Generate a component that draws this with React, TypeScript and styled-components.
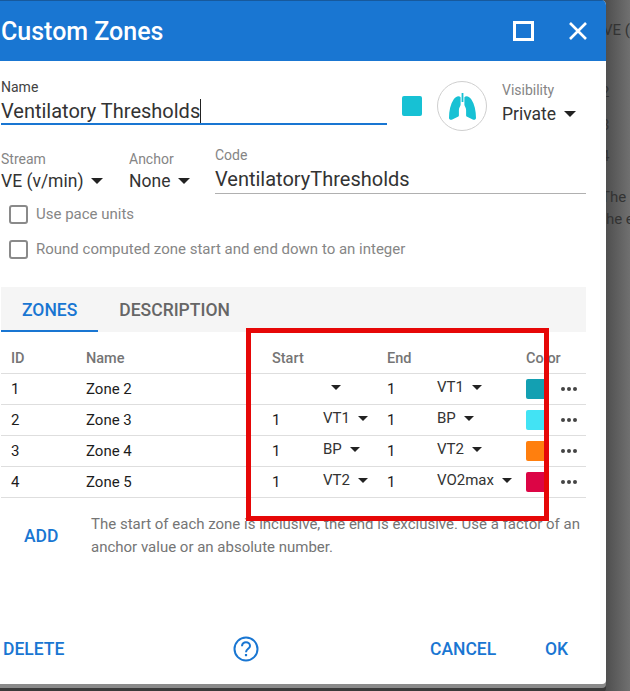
import styled, { createGlobalStyle } from "styled-components";

const blue = "#1976d2";

const GlobalStyle = createGlobalStyle`
  html, body {
    margin: 0;
    padding: 0;
    overflow: hidden;
    background: #616161;
    font-family: Roboto, "Liberation Sans", sans-serif;
  }
`;

const Page = styled.div`
  position: relative;
  width: 630px;
  height: 691px;
  overflow: hidden;
  background: linear-gradient(90deg, #4f4f4f 606px, #707070 630px);
`;

const Backdrop = styled.div`
  display: flex;
  flex-direction: column;
  padding: 19px 0 0 601px;
  color: #333;
  font-size: 15px;
  line-height: 22px;
  white-space: nowrap;
`;

const BackdropRow = styled.div<{ $gap: number; $indent?: number }>`
  margin-bottom: ${(p) => p.$gap}px;
  padding-left: ${(p) => p.$indent ?? 0}px;
`;

const Dialog = styled.div`
  position: absolute;
  top: 0;
  left: 0;
  width: 606px;
  height: 684px;
  display: flex;
  flex-direction: column;
  background: #fff;
  border-radius: 0 5px 4px 0;
  box-shadow: 0 4px 0 #8a8a8a, 0 8px 0 #3a3a3a;
  overflow: hidden;
`;

const TitleBar = styled.div`
  height: 60px;
  flex: none;
  display: flex;
  align-items: center;
  justify-content: space-between;
  padding: 0 18px 0 1px;
  background: ${blue};
  border-top: 1px solid #17599c;
  color: #fff;
`;

const Title = styled.h1`
  margin: 0;
  font-size: 25px;
  font-weight: 500;
`;

const TitleActions = styled.div`
  display: flex;
  align-items: center;
  gap: 34px;
`;

const Body = styled.div`
  flex: 1;
  display: flex;
  flex-direction: column;
  padding: 0 20px 0 1px;
`;

const NameRow = styled.div`
  display: flex;
  align-items: flex-start;
  height: 79px;
`;

const NameField = styled.div`
  width: 386px;
  height: 64px;
  padding-top: 18px;
  box-sizing: border-box;
  border-bottom: 2px solid ${blue};
`;

const FieldLabel = styled.div<{ $muted?: boolean }>`
  font-size: 14px;
  line-height: 16px;
  color: ${(p) => (p.$muted ? "#858585" : "#424242")};
`;

const NameValue = styled.div`
  display: flex;
  margin-top: 3px;
  font-size: 20px;
  line-height: 26px;
  color: #333;
`;

const Caret = styled.span`
  width: 1px;
  height: 24px;
  margin-top: 1px;
  background: #222;
`;

const ColorChip = styled.div`
  width: 20px;
  height: 20px;
  margin: 35px 0 0 15px;
  border-radius: 2px;
  background: #17c1d4;
`;

const IconCircle = styled.div`
  width: 50px;
  height: 50px;
  margin: 20px 0 0 15px;
  box-sizing: border-box;
  display: flex;
  align-items: center;
  justify-content: center;
  border: 1px solid #cfcfcf;
  border-radius: 50%;
`;

const VisibilityField = styled.div`
  margin: 21px 0 0 15px;
`;

const SelectBox = styled.div<{ $size?: number; $top?: number }>`
  display: flex;
  align-items: center;
  gap: 8px;
  margin-top: ${(p) => p.$top ?? 0}px;
  color: #333;
  font-size: ${(p) => p.$size ?? 17.5}px;
  line-height: 24px;
  white-space: nowrap;
`;

const Triangle = styled.span`
  width: 0;
  height: 0;
  border-left: 6px solid transparent;
  border-right: 6px solid transparent;
  border-top: 6px solid #222;
`;

const SmallTriangle = styled(Triangle)`
  border-left-width: 5.5px;
  border-right-width: 5.5px;
  border-top-width: 5.5px;
`;

const StreamRow = styled.div`
  display: grid;
  grid-template-columns: 128px 86px 1fr;
  height: 54px;
`;

const StreamField = styled.div`
  padding-top: 11px;
`;

const CodeField = styled.div`
  height: 54px;
  padding-top: 7px;
  box-sizing: border-box;
  border-bottom: 1px solid #b0b0b0;
`;

const CodeValue = styled.div`
  font-size: 20px;
  line-height: 26px;
  margin-top: 3px;
  color: #333;
`;

const CheckRow = styled.label<{ $height: number }>`
  display: flex;
  align-items: center;
  gap: 8px;
  height: ${(p) => p.$height}px;
  padding: 5px 0 0 8px;
  box-sizing: border-box;
  color: #868686;
  font-size: 15px;
`;

const CheckBox = styled.span`
  width: 19px;
  height: 19px;
  box-sizing: border-box;
  border: 2px solid #8a8a8a;
  border-radius: 3px;
`;

const TabBar = styled.div`
  display: flex;
  height: 45px;
  margin-top: 23px;
  background: #f5f5f5;
`;

const Tab = styled.div<{ $active?: boolean }>`
  display: flex;
  align-items: center;
  justify-content: center;
  padding: 2px 21px 0;
  font-size: 17.5px;
  font-weight: 500;
  color: ${(p) => (p.$active ? blue : "#666")};
  border-bottom: 2px solid ${(p) => (p.$active ? blue : "transparent")};
`;

const Row = styled.div<{ $header?: boolean }>`
  display: grid;
  grid-template-columns: 75px 186px 51px 64px 50px 89px 35px 1fr;
  align-items: center;
  height: ${(p) => (p.$header ? 42 : 31)}px;
  box-sizing: border-box;
  padding: ${(p) => (p.$header ? "12px" : "0")} 0 0 10px;
  border-bottom: 1px solid #dedede;
  font-size: ${(p) => (p.$header ? 14.5 : 15)}px;
  font-weight: ${(p) => (p.$header ? 500 : 400)};
  color: ${(p) => (p.$header ? "#757575" : "#1c1c1c")};
`;

const Cell = styled.div`
  white-space: nowrap;
`;

const AnchorCell = styled.div`
  margin-top: -4px;
`;

const Swatch = styled.div<{ $color: string }>`
  width: 20px;
  height: 20px;
  border-radius: 2px;
  background: ${(p) => p.$color};
`;

const Dots = styled.div`
  display: flex;
  gap: 2px;
`;

const Dot = styled.span`
  width: 4px;
  height: 4px;
  border-radius: 50%;
  background: #444;
`;

const AddRow = styled.div`
  display: flex;
  align-items: center;
  height: 76px;
`;

const TextButton = styled.div`
  color: ${blue};
  font-size: 17.5px;
  font-weight: 500;
  white-space: nowrap;
`;

const AddButton = styled(TextButton)`
  width: 90px;
  padding-left: 23px;
  box-sizing: border-box;
`;

const HelpText = styled.p`
  width: 495px;
  margin: 0;
  color: #757575;
  font-size: 15px;
  line-height: 23px;
`;

const Footer = styled.div`
  display: grid;
  grid-template-columns: 230px 197px 115px 1fr;
  align-items: center;
  height: 34px;
  margin: 58px 0 0;
  padding-left: 2px;
`;

const HighlightBox = styled.div`
  position: absolute;
  top: 328px;
  left: 246px;
  width: 303px;
  height: 193px;
  box-sizing: border-box;
  border: 5px solid #e60707;
  pointer-events: none;
`;

const zones = [
  { id: 1, name: "Zone 2", start: "", startAnchor: "", end: "1", endAnchor: "VT1", color: "#13a0b2" },
  { id: 2, name: "Zone 3", start: "1", startAnchor: "VT1", end: "1", endAnchor: "BP", color: "#42e3f4" },
  { id: 3, name: "Zone 4", start: "1", startAnchor: "BP", end: "1", endAnchor: "VT2", color: "#ff7f0e" },
  { id: 4, name: "Zone 5", start: "1", startAnchor: "VT2", end: "1", endAnchor: "VO2max", color: "#dc0545" },
];

const Lungs = () => (
  <svg width="27" height="27" viewBox="0 0 27 27" fill="#17c1d4">
    <path d="M12.6 0h1.8v9l-1.8 0z" />
    <path d="M11.6 4.2v7.6c0 1.6-1.7 2.4-1.7 5.2v5.2c0 .8-.3 1.2-1 1.6l-5.6 2.8C1.6 27.2 0 26.6 0 24.8c0-7 1.5-13.8 4.6-18.4C6.2 4 9.6 2 11.6 4.2z" />
    <path d="M15.4 4.2v7.6c0 1.6 1.7 2.4 1.7 5.2v5.2c0 .8.3 1.2 1 1.6l5.6 2.8c1.7.6 3.3 0 3.3-1.8 0-7-1.5-13.8-4.6-18.4C20.8 4 17.4 2 15.4 4.2z" />
  </svg>
);

const MaximizeIcon = () => (
  <svg width="21" height="20" viewBox="0 0 21 20" fill="none" stroke="#fff" strokeWidth="3">
    <path d="M1.5 1.5h18v17h-18z" />
  </svg>
);

const CloseIcon = () => (
  <svg width="20" height="20" viewBox="0 0 20 20" fill="none" stroke="#fff" strokeWidth="2.6">
    <path d="M2 2l16 16M18 2L2 18" />
  </svg>
);

const HelpIcon = () => (
  <svg width="26" height="26" viewBox="0 0 26 26" fill="none" stroke={blue}>
    <circle cx="13" cy="13" r="11.5" strokeWidth="2" />
    <path d="M9 10.2c0-2.4 1.8-3.9 4-3.9s4 1.5 4 3.6c0 2.8-4 3-4 6.3" strokeWidth="2" />
    <path d="M13 18v2.2" strokeWidth="2.2" />
  </svg>
);

const App = () => (
  <Page>
    <GlobalStyle />
    <Backdrop>
      <BackdropRow $gap={40} $indent={2}>VE (v/min)</BackdropRow>
      <BackdropRow $gap={11}>2</BackdropRow>
      <BackdropRow $gap={9}>3</BackdropRow>
      <BackdropRow $gap={19}>4</BackdropRow>
      <BackdropRow $gap={0}>The</BackdropRow>
      <BackdropRow $gap={0}>the e</BackdropRow>
    </Backdrop>
    <Dialog>
      <TitleBar>
        <Title>Custom Zones</Title>
        <TitleActions>
          <MaximizeIcon />
          <CloseIcon />
        </TitleActions>
      </TitleBar>
      <Body>
        <NameRow>
          <NameField>
            <FieldLabel>Name</FieldLabel>
            <NameValue>
              Ventilatory Thresholds
              <Caret />
            </NameValue>
          </NameField>
          <ColorChip />
          <IconCircle>
            <Lungs />
          </IconCircle>
          <VisibilityField>
            <FieldLabel $muted>Visibility</FieldLabel>
            <SelectBox $top={4}>
              Private <Triangle />
            </SelectBox>
          </VisibilityField>
        </NameRow>
        <StreamRow>
          <StreamField>
            <FieldLabel $muted>Stream</FieldLabel>
            <SelectBox $top={2}>
              VE (v/min) <Triangle />
            </SelectBox>
          </StreamField>
          <StreamField>
            <FieldLabel $muted>Anchor</FieldLabel>
            <SelectBox $top={2}>
              None <Triangle />
            </SelectBox>
          </StreamField>
          <CodeField>
            <FieldLabel $muted>Code</FieldLabel>
            <CodeValue>VentilatoryThresholds</CodeValue>
          </CodeField>
        </StreamRow>
        <CheckRow $height={35}>
          <CheckBox />
          Use pace units
        </CheckRow>
        <CheckRow $height={35}>
          <CheckBox />
          Round computed zone start and end down to an integer
        </CheckRow>
        <TabBar>
          <Tab $active>ZONES</Tab>
          <Tab>DESCRIPTION</Tab>
        </TabBar>
        <Row $header>
          <Cell>ID</Cell>
          <Cell>Name</Cell>
          <Cell>Start</Cell>
          <Cell />
          <Cell>End</Cell>
          <Cell />
          <Cell>Color</Cell>
          <Cell />
        </Row>
        {zones.map((zone) => (
          <Row key={zone.id}>
            <Cell>{zone.id}</Cell>
            <Cell>{zone.name}</Cell>
            <Cell>{zone.start}</Cell>
            <AnchorCell>
              <SelectBox $size={15}>
                <span>{zone.startAnchor}</span>
                <SmallTriangle />
              </SelectBox>
            </AnchorCell>
            <Cell>{zone.end}</Cell>
            <AnchorCell>
              <SelectBox $size={15}>
                <span>{zone.endAnchor}</span>
                <SmallTriangle />
              </SelectBox>
            </AnchorCell>
            <Swatch $color={zone.color} />
            <Dots>
              <Dot />
              <Dot />
              <Dot />
            </Dots>
          </Row>
        ))}
        <AddRow>
          <AddButton>ADD</AddButton>
          <HelpText>
            The start of each zone is inclusive, the end is exclusive. Use a factor of an anchor
            value or an absolute number.
          </HelpText>
        </AddRow>
        <Footer>
          <TextButton>DELETE</TextButton>
          <HelpIcon />
          <TextButton>CANCEL</TextButton>
          <TextButton>OK</TextButton>
        </Footer>
      </Body>
    </Dialog>
    <HighlightBox />
  </Page>
);

export default App;
